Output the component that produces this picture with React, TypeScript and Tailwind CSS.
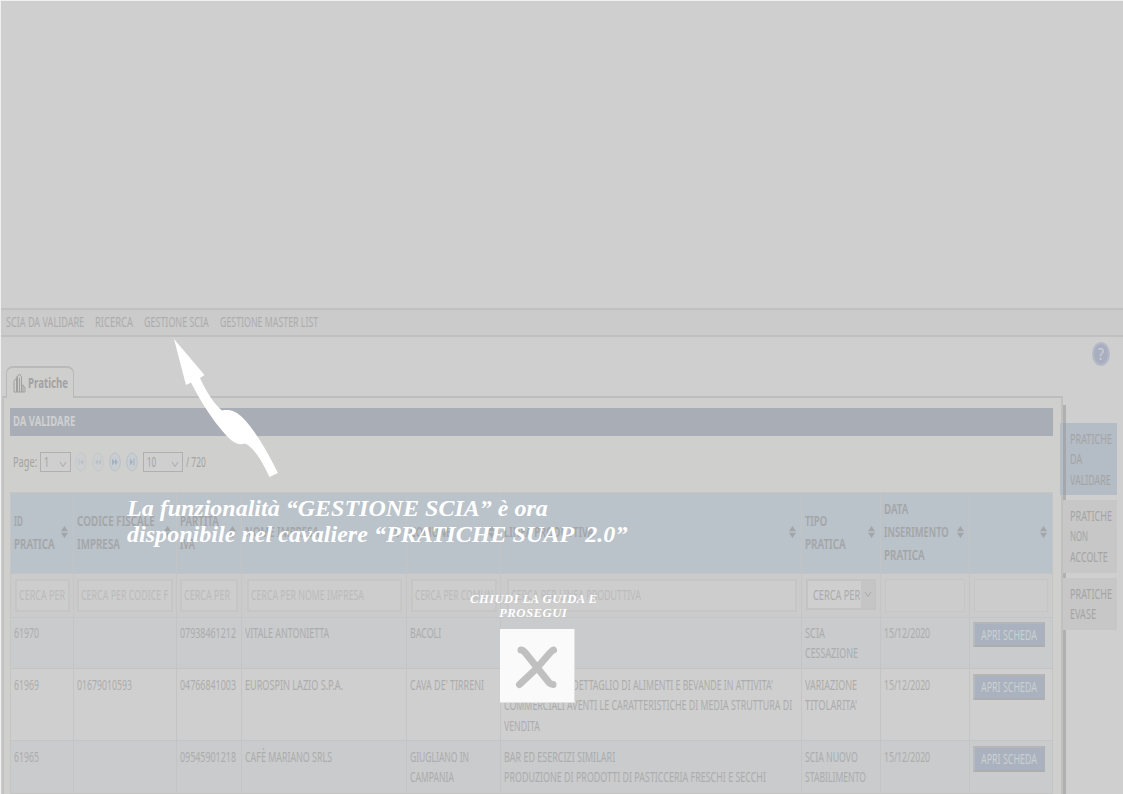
import { useLayoutEffect, useRef, useState } from "react";
import type { ReactNode } from "react";

type Line = [string, number];

/* One line of text condensed or stretched to a given width. */
function Fit({ t, w, className = "" }: { t: string; w: number; className?: string }) {
  const ref = useRef<HTMLSpanElement>(null);
  const [scale, setScale] = useState(1);
  useLayoutEffect(() => {
    if (ref.current && ref.current.offsetWidth) setScale(w / ref.current.offsetWidth);
  }, [t, w]);
  return (
    <span className={`block ${className}`} style={{ width: w }}>
      <span ref={ref} className="inline-block origin-left whitespace-pre align-top" style={{ transform: `scaleX(${scale})` }}>
        {t}
      </span>
    </span>
  );
}

function Lines({ lines, className = "" }: { lines: Line[]; className?: string }) {
  return (
    <div className={className}>
      {lines.map(([t, w]) => (
        <Fit key={t} t={t} w={w} />
      ))}
    </div>
  );
}

const cols = "grid grid-cols-[63px_103px_65px_165px_94px_301px_79px_89px_83px]";

const headers: Line[][] = [
  [["ID", 9], ["PRATICA", 41]],
  [["CODICE FISCALE", 78], ["IMPRESA", 43]],
  [["PARTITA", 39], ["IVA", 15]],
  [["NOME IMPRESA", 74]],
  [["COMUNE", 41]],
  [["LINEA PRODUTTIVA", 90]],
  [["TIPO", 22], ["PRATICA", 41]],
  [["DATA", 24], ["INSERIMENTO", 65], ["PRATICA", 41]],
  [],
];

const filters: { box: string; t: string; w: number }[] = [
  { box: "ml-[4px] w-[55px]", t: "CERCA PER", w: 46 },
  { box: "ml-[3px] w-[96px]", t: "CERCA PER CODICE F", w: 87 },
  { box: "ml-[3px] w-[58px]", t: "CERCA PER", w: 46 },
  { box: "ml-[5px] w-[155px]", t: "CERCA PER NOME IMPRESA", w: 113 },
  { box: "ml-[4px] w-[86px]", t: "CERCA PER COMUN", w: 78 },
  { box: "ml-[6px] w-[290px]", t: "CERCA PER LINEA PRODUTTIVA", w: 130 },
];

const rows: { h: string; bg: string; btn: string; cells: Line[][] }[] = [
  {
    h: "h-[51px] pt-[5px]", bg: "bg-[#c9cbcd]", btn: "h-[25px]",
    cells: [[["61970", 25]], [], [["07938461212", 56]], [["VITALE ANTONIETTA", 84]], [["BACOLI", 31]], [], [["SCIA", 20], ["CESSAZIONE", 53]], [["15/12/2020", 46]]],
  },
  {
    h: "h-[72px] pt-[6px]", bg: "bg-[#cfcfcf]", btn: "h-[26px]",
    cells: [[["61969", 25]], [["01679010593", 55]], [["04766841003", 56]], [["EUROSPIN LAZIO S.P.A.", 98]], [["CAVA DE' TIRRENI", 74]],
      [["COMMERCIO AL DETTAGLIO DI ALIMENTI E BEVANDE IN ATTIVITA'", 269], ["COMMERCIALI AVENTI LE CARATTERISTICHE DI MEDIA STRUTTURA DI", 288], ["VENDITA", 36]],
      [["VARIAZIONE", 52], ["TITOLARITA'", 52]], [["15/12/2020", 46]]],
  },
  {
    h: "h-[53px] pt-[6px]", bg: "bg-[#c9cbcd]", btn: "h-[26px]",
    cells: [[["61965", 25]], [], [["09545901218", 56]], [["CAFÈ MARIANO SRLS", 87]], [["GIUGLIANO IN", 59], ["CAMPANIA", 44]],
      [["BAR ED ESERCIZI SIMILARI", 111], ["PRODUZIONE DI PRODOTTI DI PASTICCERIA FRESCHI E SECCHI", 262]],
      [["SCIA NUOVO", 53], ["STABILIMENTO", 61]], [["15/12/2020", 46]]],
  },
];

function Sort() {
  return (
    <svg className="shrink-0" width="7" height="12" viewBox="0 0 7 12" fill="#a3a6a9">
      <path d="M0 5.3L3.5 0L7 5.3ZM0 6.7H7L3.5 12Z" />
    </svg>
  );
}

function Pager({ d, strong }: { d: string; strong?: boolean }) {
  return (
    <svg width="12" height="20" viewBox="0 0 12 20" fill={strong ? "#a2b0c0" : "#bbc0c5"}>
      <ellipse cx="6" cy="10" rx="5.3" ry="9" fill={strong ? "#c8cdd2" : "#cccecf"} stroke={strong ? "#b9c0c8" : "#c5c8ca"} />
      <path d={d} />
    </svg>
  );
}

function Select({ t, w, box }: { t: string; w: number; box: string }) {
  return (
    <div className={`flex h-[20px] items-center justify-between border border-[#b0b0b0] bg-[#cfcfcf] pl-[3px] pr-[3px] ${box}`}>
      <Fit t={t} w={w} />
      <svg className="mt-[6px]" width="8" height="7" viewBox="0 0 8 7" fill="none" stroke="#aaa">
        <path d="M1 1L4 5.5L7 1" />
      </svg>
    </div>
  );
}

function SideTab({ lines, box }: { lines: Line[]; box: string }) {
  return (
    <div className={`flex items-center ${box}`}>
      <Lines lines={lines} className="leading-[20.3px]" />
    </div>
  );
}

function Overlay({ children, box }: { children: ReactNode; box: string }) {
  return <div className={`absolute font-['Liberation_Serif',serif] font-bold italic text-white ${box}`}>{children}</div>;
}

export default function App() {
  return (
    <div className="relative flex h-[794px] w-[1123px] flex-col overflow-hidden border-l border-t border-[#f0f0f0] bg-[#cfcfcf] font-['Noto_Sans',sans-serif] text-[14.3px] text-[#acacac]">
      <div className="h-[307px] shrink-0" />
      <nav className="flex h-[29px] shrink-0 items-center border-b-2 border-t-2 border-[#c0c0c0] bg-[#cbcbcb] pb-px pl-[5px]">
        <Fit t="SCIA DA VALIDARE" w={78} className="mr-[11px]" />
        <Fit t="RICERCA" w={38} className="mr-[11px]" />
        <Fit t="GESTIONE SCIA" w={65} className="mr-[11px]" />
        <Fit t="GESTIONE MASTER LIST" w={98} />
      </nav>

      <div className="flex h-[59px] shrink-0 justify-between">
        <div className="z-10 ml-[5px] mt-[29px] flex h-[32px] w-[68px] items-center rounded-t-[7px] border-x border-t-2 border-[#b9b9b9] bg-[#cfcfcd] pl-[6px] font-bold text-[#a2a2a2]">
          <svg className="mr-[2px]" width="13" height="20" viewBox="0 0 13 20" fill="none" stroke="#a0a0a0">
            <path d="M1 19V8L3.500 5V19M4.500 19V3L6.500 1L8.500 4V19M8.500 12H10L12 15V19H1M6.500 5V19M3.500 5L4.500 3M10 13V19" />
          </svg>
          <Fit t="Pratiche" w={40} className="-mt-px" />
        </div>
        <div className="mr-[13px] mt-[5px] flex h-[24px] w-[18px] items-center justify-center rounded-[50%] border-2 border-[#b4b9c7] bg-[#a8aec0] text-[16px] text-[#cdd0d5]">
          <Fit t="?" w={6} />
        </div>
      </div>

      <div className="flex grow">
        <main className="ml-px h-[398px] w-[1061px] shrink-0 border-l-2 border-r-2 border-t-2 border-l-[#c3c3c3] border-r-[#c0c0bf] border-t-[#bdbdbd] bg-[#cfcfcd] pl-[6px] pt-[9px]">
          <div className="mt-px flex h-[28px] w-[1043px] items-center bg-[#a9adb6] pl-[3px] font-bold text-[#cfd0d1]">
            <Fit t="DA VALIDARE" w={62} className="-mt-[3px]" />
          </div>
          <div className="flex h-[56px] items-center pb-[5px] pl-[3px] text-[#a3a3a3]">
            <Fit t="Page:" w={24} className="mr-[3px]" />
            <Select t="1" w={5} box="w-[31px] mr-[4px]" />
            <div className="mr-[5px] mt-px flex gap-[5px]">
              <Pager d="M3.500 7V13H4.500V7ZM8.500 7V13L5 10Z" />
              <Pager d="M6 7V13L3 10ZM9 7V13L6 10Z" />
              <Pager strong d="M3 6.500V13.500L6 10ZM6 6.500V13.500L9 10Z" />
              <Pager strong d="M4 6.500V13.500L7 10ZM7.500 6.500H8.500V13.500H7.500Z" />
            </div>
            <Select t="10" w={9} box="w-[40px] mr-[3px]" />
            <Fit t="/ 720" w={20} />
          </div>

          <div className="w-[1043px] border-l border-t border-[#c5c5c5]">
            <div className={`${cols} h-[81px] bg-[#bac2ca] text-[15px] font-semibold leading-[23px] text-[#a3a5a7]`}>
              {headers.map((lines, i) => (
                <div key={i} className="flex items-center justify-between border-b border-r border-[#c3c4c5] pb-[3px] pl-[3px] pr-[5px]">
                  <Lines lines={lines} />
                  <Sort />
                </div>
              ))}
            </div>
            <div className={`${cols} h-[44px] bg-[#cbcbcb] text-[#bbb]`}>
              {filters.map((f, i) => (
                <div key={i} className="border-b border-r border-[#c5c5c5] pt-[5px]">
                  <div className={`flex h-[33px] items-center overflow-hidden border-2 border-[#c6c6c6] bg-[#cdcdcd] pb-px pl-[2px] ${f.box}`}>
                    <Fit t={f.t} w={f.w} />
                  </div>
                </div>
              ))}
              <div className="border-b border-r border-[#c5c5c5] pt-[5px]">
                <div className="ml-[4px] flex h-[31px] w-[70px] items-center justify-between border-2 border-[#c3c3c3] bg-[#cfcfcf] pl-[5px] text-[#ababab]">
                  <Fit t="CERCA PER" w={47} />
                  <div className="flex h-full w-[13px] items-center justify-center bg-[#c5c5c5]">
                    <svg width="8" height="7" viewBox="0 0 8 7" fill="none" stroke="#aaa">
                      <path d="M1 1L4 5.500L7 1" />
                    </svg>
                  </div>
                </div>
              </div>
              <div className="border-b border-r border-[#c5c5c5] pt-[5px]">
                <div className="ml-[4px] h-[33px] w-[80px] border border-[#c6c6c6] bg-[#cccccc]" />
              </div>
              <div className="border-b border-r border-[#c5c5c5] pt-[5px]">
                <div className="ml-[4px] h-[33px] w-[74px] border border-[#c6c6c6] bg-[#cccccc]" />
              </div>
            </div>
            {rows.map((r, i) => (
              <div key={i} className={`${cols} leading-[20.3px] ${r.bg}`}>
                {r.cells.map((c, j) => (
                  <div key={j} className={`border-b border-r border-[#c4c4c4] pl-[3px] ${r.h}`}>
                    <Lines lines={c} />
                  </div>
                ))}
                <div className={`border-b border-r border-[#c4c4c4] pl-[3px] ${r.h}`}>
                  <div className={`-mt-px flex w-[72px] items-center justify-center border-2 border-b-[#adadad] border-l-[#b8bbbe] border-r-[#aeb1b5] border-t-[#b5b5b5] bg-[#a9b2be] pt-px text-[#cccfd1] ${r.btn}`}>
                    <Fit t="APRI SCHEDA" w={56} />
                  </div>
                </div>
              </div>
            ))}
          </div>
        </main>
        <aside className="flex h-[398px] w-[54px] shrink-0 flex-col">
          <div className="h-[9px]" />
          <div className="flex h-[389px] flex-col gap-[5px] border-l-[3px] border-[#b0b0b0] pt-[18px] text-[#a4a4a4]">
            <div className="-ml-[6px] flex h-[72px] w-[57px] bg-[#b4bcc6]">
              <div className="ml-[3px] mr-[4px] w-[3px] bg-[#a4a8ad]" />
              <SideTab box="pt-px" lines={[["PRATICHE", 42], ["DA", 12], ["VALIDARE", 41]]} />
            </div>
            <SideTab box="-ml-[3px] w-[54px] h-[73px] bg-[#c7c7c7] pl-[7px]" lines={[["PRATICHE", 42], ["NON", 18], ["ACCOLTE", 38]]} />
            <SideTab box="-ml-[3px] w-[54px] h-[52px] bg-[#c7c7c7] pl-[7px]" lines={[["PRATICHE", 42], ["EVASE", 26]]} />
          </div>
        </aside>
      </div>

      <svg className="absolute left-[172px] top-[338px] z-20" width="110" height="142" viewBox="173 339 110 142" fill="#fff">
        <path d="M174 339L204.500 375L200 378C206 391 213 403 222 410.500C230 409 236 411 243 418C257 433 268 453 278 473L269.500 477C263 463 254 447 245 443.500C238 446 232 442 225 434C211 418 201 402 191 382.500L186 385Z" />
      </svg>
      <Overlay box="left-[126px] top-[494px] z-20 text-[24px] leading-[26px]">
        <Fit t="La funzionalità “GESTIONE SCIA” è ora" w={421} />
        <Fit t="disponibile nel cavaliere “PRATICHE SUAP  2.0”" w={500} />
      </Overlay>
      <Overlay box="left-[469px] top-[591px] z-20 flex w-[126px] flex-col items-center text-[13.5px] leading-[14px] tracking-[0.5px]">
        <Fit t="CHIUDI LA GUIDA E" w={127} />
        <Fit t="PROSEGUI" w={68} />
      </Overlay>
      <button aria-label="Chiudi" className="absolute left-[499px] top-[628px] z-20 h-[74px] w-[75px] border-b border-r border-[#e0e0e0] bg-[#fafafa]">
        <svg width="74" height="73" viewBox="0 0 74 73" fill="none" stroke="#c0c0c0" strokeWidth="7" strokeLinecap="round" strokeLinejoin="round">
          <path d="M21 21Q23 21 25.500 24L49 53.500Q51 55.500 53 55.500M53.500 21Q52 21.500 49 25L36 40L19.500 55.500" />
        </svg>
      </button>
    </div>
  );
}
